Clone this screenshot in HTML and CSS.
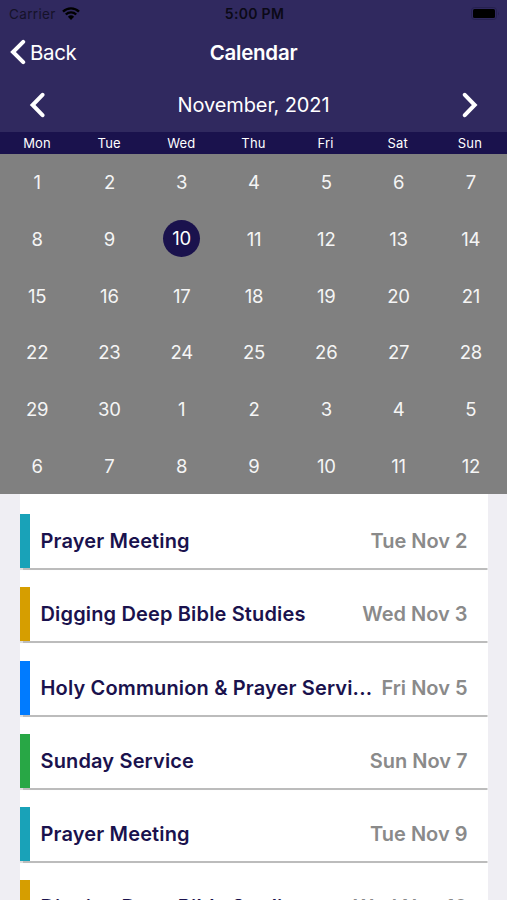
FILE: index.html
```html
<!DOCTYPE html>
<html lang="en">
<head>
  <meta charset="UTF-8" />
  <meta name="viewport" content="width=device-width, initial-scale=1.0" />
  <title>Calendar</title>
  <link rel="stylesheet" href="styles.css">
</head>
<body>
  <header class="header">
    <div class="status-bar">
      <div class="carrier">
        <span class="carrier-name">Carrier</span>
        <svg class="wifi" viewBox="0 0 18 13" width="18" height="13">
          <path d="M1 4.6a11.5 11.5 0 0 1 16 0M3.8 7.5a7.5 7.5 0 0 1 10.4 0" fill="none" stroke="#000" stroke-width="2.4" />
          <path d="M5.9 9.8a4.5 4.5 0 0 1 6.2 0L9 13z" fill="#000" />
        </svg>
      </div>
      <span class="time">5:00 PM</span>
      <div class="battery-wrap">
        <svg width="29" height="13" viewBox="0 0 29 13">
          <rect x="0.5" y="0.5" width="25" height="12" rx="3" fill="none" stroke="#262150" />
          <rect x="2" y="2" width="22" height="9" rx="1.5" fill="#000" />
          <path d="M27 4.5q1.6 2 0 4z" fill="#262150" />
        </svg>
      </div>
    </div>

    <nav class="nav-bar">
      <a class="back">
        <svg width="16" height="26" viewBox="0 0 16 26"><path class="chevron" d="M13.2 2.8 3 13l10.2 10.2" /></svg>
        <span class="back-label">Back</span>
      </a>
      <h1 class="title">Calendar</h1>
    </nav>

    <div class="month-bar">
      <svg width="16" height="26" viewBox="0 0 16 26"><path class="chevron" d="M13.5 2.8 3.6 13l9.9 10.2" /></svg>
      <span class="month">November, 2021</span>
      <svg width="16" height="26" viewBox="0 0 16 26"><path class="chevron" d="M2.8 2.8 12.7 13 2.8 23.2" /></svg>
    </div>
  </header>

  <div class="weekdays">
    <span>Mon</span><span>Tue</span><span>Wed</span><span>Thu</span><span>Fri</span><span>Sat</span><span>Sun</span>
  </div>

  <div class="days">
    <span>1</span><span>2</span><span>3</span><span>4</span><span>5</span><span>6</span><span>7</span>
    <span>8</span><span>9</span><span class="today">10</span><span>11</span><span>12</span><span>13</span><span>14</span>
    <span>15</span><span>16</span><span>17</span><span>18</span><span>19</span><span>20</span><span>21</span>
    <span>22</span><span>23</span><span>24</span><span>25</span><span>26</span><span>27</span><span>28</span>
    <span>29</span><span>30</span><span>1</span><span>2</span><span>3</span><span>4</span><span>5</span>
    <span>6</span><span>7</span><span>8</span><span>9</span><span>10</span><span>11</span><span>12</span>
  </div>

  <!-- Events -->
  <main class="events">
    <div class="event teal">
      <span class="event-name">Prayer Meeting</span>
      <span class="event-date">Tue Nov 2</span>
    </div>
    <div class="event gold">
      <span class="event-name">Digging Deep Bible Studies</span>
      <span class="event-date">Wed Nov 3</span>
    </div>
    <div class="event blue">
      <span class="event-name">Holy Communion &amp; Prayer Servi...</span>
      <span class="event-date">Fri Nov 5</span>
    </div>
    <div class="event green">
      <span class="event-name">Sunday Service</span>
      <span class="event-date">Sun Nov 7</span>
    </div>
    <div class="event teal">
      <span class="event-name">Prayer Meeting</span>
      <span class="event-date">Tue Nov 9</span>
    </div>
    <div class="event gold">
      <span class="event-name">Digging Deep Bible Studies</span>
      <span class="event-date">Wed Nov 10</span>
    </div>
  </main>
</body>
</html>
```

FILE: styles.css
```css
* {
  box-sizing: border-box;
  margin: 0;
  padding: 0;
}

body {
  font-family: Inter, 'Liberation Sans', sans-serif;
  background-color: #efeef3;
  color: #fff;
  height: 100vh;
  overflow: hidden;
  display: flex;
  flex-direction: column;
}

svg {
  display: block;
  flex: none;
}

.header {
  height: 132px;
  background-color: #30295f;
  flex: none;
}

/* Status bar */
.status-bar {
  height: 27px;
  padding: 0 7px 0 9px;
  display: grid;
  grid-template-columns: 1fr auto 1fr;
  align-items: center;
  color: #000;
  font-size: 13.5px;
}

.carrier {
  display: flex;
  align-items: center;
  gap: 6px;
  color: #151229;
}

.carrier-name {
  letter-spacing: 0.35px;
}

.time {
  font-weight: 600;
  font-size: 14px;
  letter-spacing: 0.3px;
  color: #0b0917;
}

.battery-wrap {
  display: flex;
  justify-content: flex-end;
}

.nav-bar {
  height: 50px;
  padding: 0 10px;
  display: grid;
  grid-template-columns: 1fr auto 1fr;
  align-items: center;
}

.back {
  display: flex;
  align-items: center;
  gap: 4px;
}

.back-label {
  font-size: 20.5px;
  letter-spacing: -0.35px;
}

.chevron {
  fill: none;
  stroke: #fff;
  stroke-width: 4;
  stroke-linecap: round;
  stroke-linejoin: miter;
}

.title {
  font-size: 20.5px;
  font-weight: 600;
  letter-spacing: -0.25px;
}

.month-bar {
  height: 55px;
  padding: 0 29px;
  display: flex;
  align-items: center;
  justify-content: space-between;
}

.month {
  font-size: 20px;
  letter-spacing: -0.1px;
}

/* Calendar */
.weekdays {
  height: 22px;
  padding: 0 1px;
  display: grid;
  grid-template-columns: repeat(7, 1fr);
  align-items: center;
  text-align: center;
  background-color: #1a124d;
  font-size: 13px;
  letter-spacing: 0.2px;
  flex: none;
}

.days {
  height: 340px;
  padding: 0 0 0 1px;
  display: grid;
  grid-template-columns: repeat(7, 1fr);
  grid-template-rows: repeat(6, 1fr);
  place-items: center;
  background-color: #808080;
  font-size: 18.5px;
  line-height: 22px;
  letter-spacing: -0.2px;
  color: #f5f5f5;
  flex: none;
}

.today {
  width: 37px;
  height: 37px;
  line-height: 37px;
  text-align: center;
  border-radius: 50%;
  background-color: #1a124d;
  color: #fff;
}

/* Event list */
.events {
  flex: 1;
  min-height: 0;
  overflow: hidden;
  margin: 0 19.5px 0 20px;
  padding-top: 20px;
  background-color: #fff;
}

.event {
  height: 54px;
  margin-bottom: 19.3px;
  padding: 0 20px 0 10.5px;
  border-left: 10px solid;
  box-shadow: 0 1.5px 1px #bcbcbc;
  background-color: #fff;
  display: flex;
  align-items: center;
  justify-content: space-between;
  gap: 8px;
  font-size: 20px;
  font-weight: 600;
  white-space: nowrap;
}

.event-name {
  min-width: 0;
  overflow: hidden;
  letter-spacing: 0.15px;
  color: #1a124d;
}

.event-date {
  flex: none;
  color: #8a8a8a;
}

.teal { border-color: #19a2b8; }
.gold { border-color: #d69e00; }
.blue { border-color: #007bff; }
.green { border-color: #28a745; }
```
